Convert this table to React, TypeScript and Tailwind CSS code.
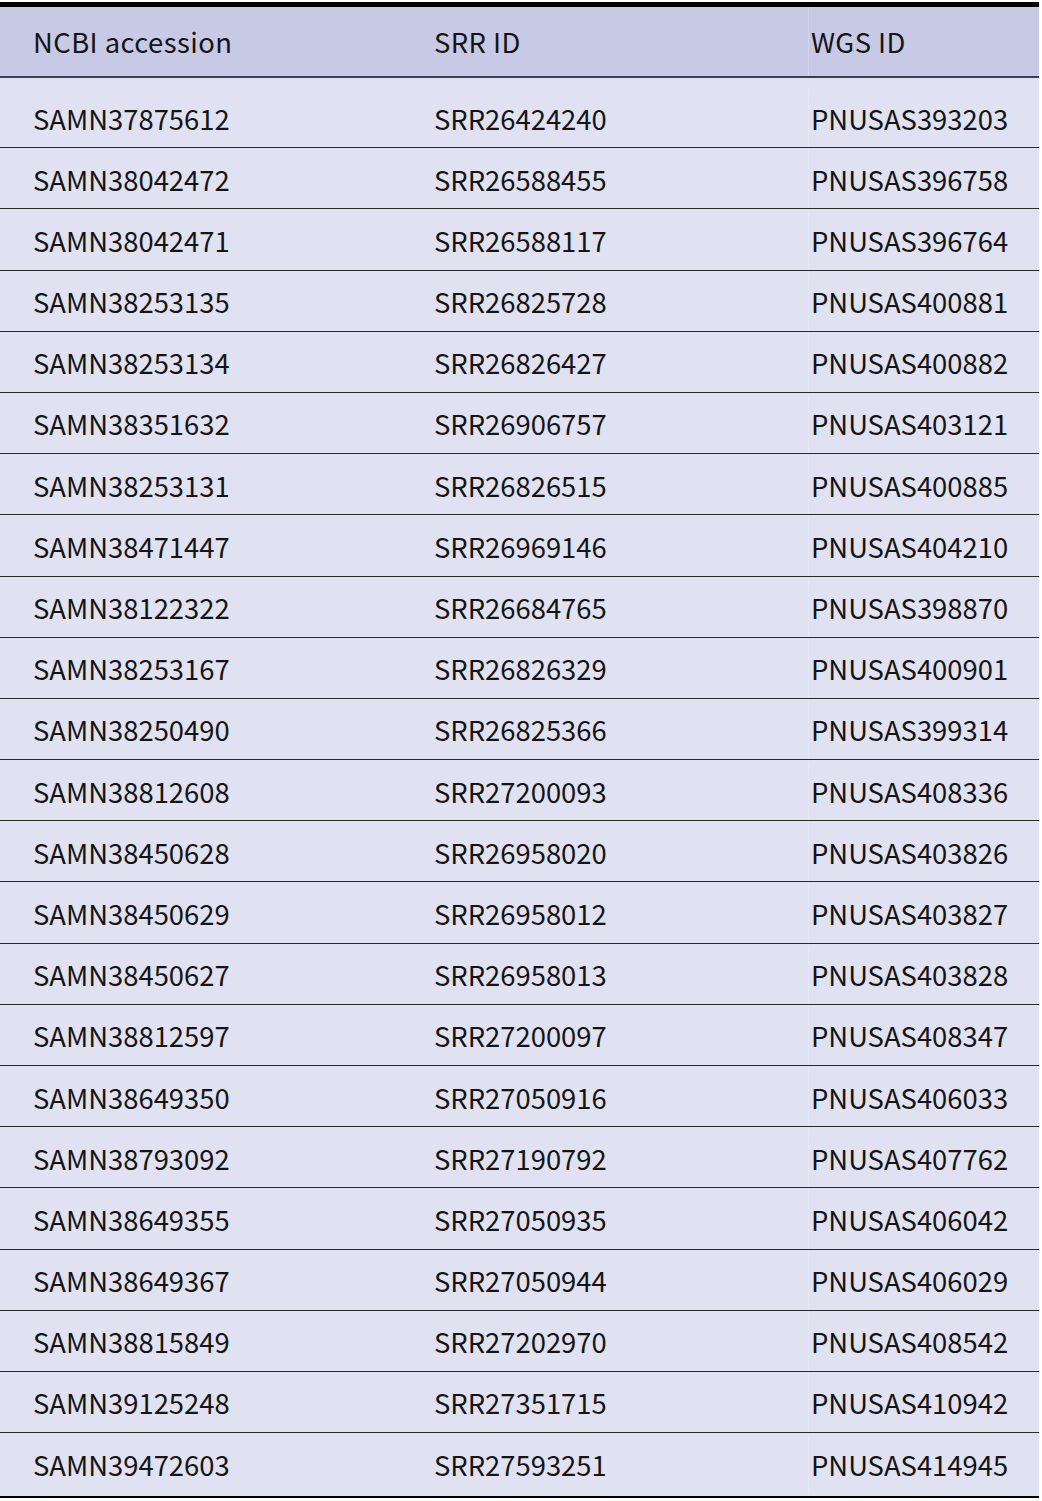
import React from 'react';

const rows: [string, string, string][] = [
  ['SAMN37875612', 'SRR26424240', 'PNUSAS393203'],
  ['SAMN38042472', 'SRR26588455', 'PNUSAS396758'],
  ['SAMN38042471', 'SRR26588117', 'PNUSAS396764'],
  ['SAMN38253135', 'SRR26825728', 'PNUSAS400881'],
  ['SAMN38253134', 'SRR26826427', 'PNUSAS400882'],
  ['SAMN38351632', 'SRR26906757', 'PNUSAS403121'],
  ['SAMN38253131', 'SRR26826515', 'PNUSAS400885'],
  ['SAMN38471447', 'SRR26969146', 'PNUSAS404210'],
  ['SAMN38122322', 'SRR26684765', 'PNUSAS398870'],
  ['SAMN38253167', 'SRR26826329', 'PNUSAS400901'],
  ['SAMN38250490', 'SRR26825366', 'PNUSAS399314'],
  ['SAMN38812608', 'SRR27200093', 'PNUSAS408336'],
  ['SAMN38450628', 'SRR26958020', 'PNUSAS403826'],
  ['SAMN38450629', 'SRR26958012', 'PNUSAS403827'],
  ['SAMN38450627', 'SRR26958013', 'PNUSAS403828'],
  ['SAMN38812597', 'SRR27200097', 'PNUSAS408347'],
  ['SAMN38649350', 'SRR27050916', 'PNUSAS406033'],
  ['SAMN38793092', 'SRR27190792', 'PNUSAS407762'],
  ['SAMN38649355', 'SRR27050935', 'PNUSAS406042'],
  ['SAMN38649367', 'SRR27050944', 'PNUSAS406029'],
  ['SAMN38815849', 'SRR27202970', 'PNUSAS408542'],
  ['SAMN39125248', 'SRR27351715', 'PNUSAS410942'],
  ['SAMN39472603', 'SRR27593251', 'PNUSAS414945'],
];

function Row({ cells, last }: { cells: [string, string, string]; last?: boolean }) {
  return (
    <div
      className={
        'grid grid-cols-[434px_374px_1fr] items-center h-[61.2px] pt-[2px] ' +
        (last ? '' : 'border-b border-[#2a2a2a]')
      }
    >
      <div className="pl-[33px]">{cells[0]}</div>
      <div>{cells[1]}</div>
      <div className="h-full flex items-center pl-[2px] border-l border-[#e6e7f4]">{cells[2]}</div>
    </div>
  );
}

export default function App() {
  return (
    <div className="bg-white pt-[2px] pb-[2px] pr-[3px]">
      <div
        className="border-t-[5px] border-b-[2px] border-black text-[27.4px] text-[#141414]"
        style={{ fontFamily: '"Noto Sans CJK JP", "Noto Sans", sans-serif' }}
      >
        {/* header */}
        <div className="grid grid-cols-[434px_374px_1fr] items-center h-[71px] bg-[#c8c9e5] border-b-2 border-[#3b3d52] tracking-[0.45px]">
          <div className="pl-[33px]">NCBI accession</div>
          <div>SRR ID</div>
          <div className="h-full flex items-center pl-[2px] border-l border-[#d3d4ec]">WGS ID</div>
        </div>
        {/* body */}
        <div className="bg-[#e0e1f1] pt-[9px] pb-[2px]">
          {rows.map((r, i) => (
            <Row key={r[0]} cells={r} last={i === rows.length - 1} />
          ))}
        </div>
      </div>
    </div>
  );
}
